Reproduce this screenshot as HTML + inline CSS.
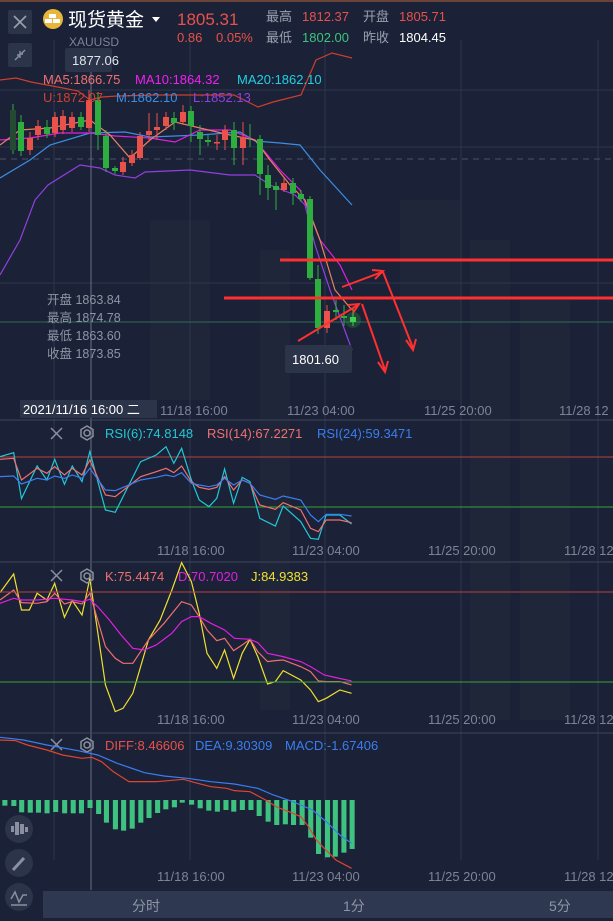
<!DOCTYPE html>
<html><head><meta charset="utf-8"><style>
html,body{margin:0;padding:0;background:#1b2136;}
body{width:613px;height:921px;overflow:hidden;position:relative;font-family:"Liberation Sans","Noto Sans CJK SC",sans-serif;}
svg{position:absolute;left:0;top:0}
text{font-family:"Liberation Sans","Noto Sans CJK SC",sans-serif}
</style></head><body>
<svg width="613" height="921" viewBox="0 0 613 921">
<rect width="613" height="921" fill="#1b2136"/>
<line x1="0" y1="1" x2="613" y2="1" stroke="#b8653a" stroke-width="1"/>
<!-- faint buildings -->
<g fill="#1f2639">
<rect x="400" y="200" width="60" height="200"/><rect x="470" y="240" width="40" height="480"/><rect x="520" y="300" width="50" height="420"/><rect x="150" y="220" width="60" height="180"/><rect x="260" y="250" width="30" height="460"/>
</g>
<!-- vertical grid -->
<g stroke="#2e364d" stroke-width="1">
<line x1="54" y1="40" x2="54" y2="860"/><line x1="190" y1="40" x2="190" y2="860"/><line x1="325" y1="40" x2="325" y2="860"/><line x1="461" y1="40" x2="461" y2="860"/><line x1="598" y1="40" x2="598" y2="860"/>
<line x1="0" y1="90" x2="613" y2="90"/><line x1="0" y1="147" x2="613" y2="147"/><line x1="0" y1="283" x2="613" y2="283"/>
</g>
<line x1="0" y1="159" x2="613" y2="159" stroke="#4a5268" stroke-dasharray="6,5"/>
<line x1="0" y1="322" x2="613" y2="322" stroke="#2d6b52"/>
<line x1="91" y1="60" x2="91" y2="890" stroke="#6a7084" stroke-width="1"/>
<g stroke="#3e465c"><line x1="0" y1="420" x2="613" y2="420"/><line x1="0" y1="562" x2="613" y2="562"/><line x1="0" y1="733" x2="613" y2="733"/></g>

<!-- BOLL & MA lines -->
<g fill="none" stroke-width="1.2">
<polyline stroke="#cc3f2e" points="0,80 16,78 31,82 47,85 63,88 78,91 90,100 102,97 117,96 156,95 234,95 258,107 273,102 301,95 316,60 332,53 352,58"/>
<polyline stroke="#3a8ee6" points="0,178 30,160 50,145 90,133 125,132 150,137 200,135 240,132 255,141 280,143 300,145 320,170 352,205"/>
<polyline stroke="#e020e0" points="0,140 30,138 60,133 90,133 115,136 150,138 175,142 200,130 230,130 255,140 280,170 300,190 320,240 340,265 352,290"/>
<polyline stroke="#e8805f" points="0,145 20,130 50,128 90,120 110,135 130,158 150,140 175,122 200,128 230,135 255,140 270,160 290,185 305,200 320,240 335,290 352,310"/>
<polyline stroke="#9040e0" points="0,275 20,240 35,200 48,185 80,165 100,168 115,175 135,178 145,172 190,170 230,175 255,175 270,185 295,195 305,205 315,245 330,290 352,350"/>
</g>
<!-- candles -->
<g>
<g fill="#2fae40" stroke="#2fae40"><line x1="13" y1="104" x2="13" y2="154"/><rect x="10" y="110" width="6" height="40" fill="#244a34" stroke="none"/></g>
<g fill="#2fae40" stroke="#2fae40"><line x1="21" y1="115" x2="21" y2="156"/><rect x="18" y="122" width="6" height="29" stroke="none"/></g>
<g fill="#e8524a" stroke="#e8524a"><line x1="30" y1="132" x2="30" y2="155"/><rect x="27" y="138" width="6" height="12" stroke="none"/></g>
<g fill="#e8524a" stroke="#e8524a"><line x1="38" y1="120" x2="38" y2="140"/><rect x="35" y="126" width="6" height="9" stroke="none"/></g>
<g fill="#2fae40" stroke="#2fae40"><line x1="47" y1="120" x2="47" y2="138"/><rect x="44" y="127" width="6" height="7" stroke="none"/></g>
<g fill="#e8524a" stroke="#e8524a"><line x1="55" y1="112" x2="55" y2="137"/><rect x="52" y="117" width="6" height="16" stroke="none"/></g>
<g fill="#e8524a" stroke="#e8524a"><line x1="63" y1="110" x2="63" y2="134"/><rect x="60" y="116" width="6" height="14" stroke="none"/></g>
<g fill="#e8524a" stroke="#e8524a"><line x1="72" y1="112" x2="72" y2="132"/><rect x="69" y="117" width="6" height="11" stroke="none"/></g>
<g fill="#2fae40" stroke="#2fae40"><line x1="81" y1="112" x2="81" y2="130"/><rect x="78" y="117" width="6" height="10" stroke="none"/></g>
<g fill="#e8524a" stroke="#e8524a"><line x1="89" y1="90" x2="89" y2="132"/><rect x="86" y="100" width="6" height="28" stroke="none"/></g>
<g fill="#2fae40" stroke="#2fae40"><line x1="98" y1="92" x2="98" y2="150"/><rect x="95" y="100" width="6" height="35" stroke="none"/></g>
<g fill="#2fae40" stroke="#2fae40"><line x1="106" y1="130" x2="106" y2="172"/><rect x="103" y="136" width="6" height="32" stroke="none"/></g>
<g fill="#2fae40" stroke="#2fae40"><line x1="115" y1="166" x2="115" y2="174"/><rect x="112" y="168" width="6" height="3" stroke="none"/></g>
<g fill="#e8524a" stroke="#e8524a"><line x1="123" y1="157" x2="123" y2="175"/><rect x="120" y="162" width="6" height="10" stroke="none"/></g>
<g fill="#e8524a" stroke="#e8524a"><line x1="132" y1="150" x2="132" y2="166"/><rect x="129" y="155" width="6" height="8" stroke="none"/></g>
<g fill="#e8524a" stroke="#e8524a"><line x1="140" y1="132" x2="140" y2="160"/><rect x="137" y="136" width="6" height="22" stroke="none"/></g>
<g fill="#e8524a" stroke="#e8524a"><line x1="149" y1="113" x2="149" y2="142"/><rect x="146" y="131" width="6" height="4" stroke="none"/></g>
<g fill="#e8524a" stroke="#e8524a"><line x1="157" y1="113" x2="157" y2="140"/><rect x="154" y="127" width="6" height="3" stroke="none"/></g>
<g fill="#e8524a" stroke="#e8524a"><line x1="166" y1="112" x2="166" y2="130"/><rect x="163" y="117" width="6" height="9" stroke="none"/></g>
<g fill="#2fae40" stroke="#2fae40"><line x1="174" y1="112" x2="174" y2="130"/><rect x="171" y="118" width="6" height="5" stroke="none"/></g>
<g fill="#e8524a" stroke="#e8524a"><line x1="183" y1="105" x2="183" y2="125"/><rect x="180" y="112" width="6" height="10" stroke="none"/></g>
<g fill="#2fae40" stroke="#2fae40"><line x1="191" y1="106" x2="191" y2="142"/><rect x="188" y="111" width="6" height="15" stroke="none"/></g>
<g fill="#2fae40" stroke="#2fae40"><line x1="200" y1="125" x2="200" y2="155"/><rect x="197" y="132" width="6" height="7" stroke="none"/></g>
<g fill="#2fae40" stroke="#2fae40"><line x1="208" y1="135" x2="208" y2="146"/><rect x="205" y="140" width="6" height="2" stroke="none"/></g>
<g fill="#e8524a" stroke="#e8524a"><line x1="217" y1="135" x2="217" y2="150"/><rect x="214" y="142" width="6" height="1.5" stroke="none"/></g>
<g fill="#e8524a" stroke="#e8524a"><line x1="225" y1="125" x2="225" y2="150"/><rect x="222" y="130" width="6" height="10" stroke="none"/></g>
<g fill="#2fae40" stroke="#2fae40"><line x1="234" y1="122" x2="234" y2="165"/><rect x="231" y="130" width="6" height="18" stroke="none"/></g>
<g fill="#e8524a" stroke="#e8524a"><line x1="243" y1="122" x2="243" y2="165"/><rect x="240" y="137" width="6" height="11" stroke="none"/></g>
<g fill="#2fae40" stroke="#2fae40"><line x1="250" y1="124" x2="250" y2="147"/></g>
<g fill="#2fae40" stroke="#2fae40"><line x1="260" y1="135" x2="260" y2="195"/><rect x="257" y="139" width="6" height="35" stroke="none"/></g>
<g fill="#2fae40" stroke="#2fae40"><line x1="268" y1="165" x2="268" y2="200"/><rect x="265" y="175" width="6" height="13" stroke="none"/></g>
<g fill="#2fae40" stroke="#2fae40"><line x1="276" y1="182" x2="276" y2="210"/><rect x="273" y="186" width="6" height="4" stroke="none"/></g>
<g fill="#e8524a" stroke="#e8524a"><line x1="284" y1="178" x2="284" y2="192"/><rect x="281" y="183" width="6" height="7" stroke="none"/></g>
<g fill="#2fae40" stroke="#2fae40"><line x1="293" y1="178" x2="293" y2="205"/><rect x="290" y="183" width="6" height="10" stroke="none"/></g>
<g fill="#2fae40" stroke="#2fae40"><line x1="301" y1="190" x2="301" y2="202"/><rect x="298" y="194" width="6" height="5" stroke="none"/></g>
<g fill="#2fae40" stroke="#2fae40"><line x1="310" y1="196" x2="310" y2="280"/><rect x="307" y="199" width="6" height="79" stroke="none"/></g>
<g fill="#2fae40" stroke="#2fae40"><line x1="318" y1="265" x2="318" y2="334"/><rect x="315" y="279" width="6" height="49" stroke="none"/></g>
<g fill="#e8524a" stroke="#e8524a"><line x1="327" y1="305" x2="327" y2="333"/><rect x="324" y="311" width="6" height="17" stroke="none"/></g>
<g fill="#2fae40" stroke="#2fae40"><line x1="336" y1="300" x2="336" y2="320"/><rect x="333" y="310" width="6" height="2" stroke="none"/></g>
<g fill="#2fae40" stroke="#2fae40"><line x1="344" y1="305" x2="344" y2="326"/><rect x="341" y="316" width="6" height="2" stroke="none"/></g>
<circle cx="353" cy="320" r="8" fill="#2fae40" opacity="0.25"/>
<g fill="#3fd050" stroke="#3fd050"><line x1="353" y1="308" x2="353" y2="326"/><rect x="350" y="317" width="6" height="5" stroke="none"/></g>
</g>
<!-- red drawing -->
<g stroke="#ff3030" fill="none">
<line x1="280" y1="260" x2="613" y2="260" stroke-width="3"/>
<line x1="224" y1="298" x2="613" y2="298" stroke-width="3"/>
<g stroke-width="2">
<line x1="298" y1="341" x2="358" y2="305"/><polyline points="348,305 359,304 353,313"/>
<line x1="342" y1="287" x2="382" y2="272"/><polyline points="372,270 383,271 375,279"/>
<line x1="383" y1="272" x2="413" y2="348"/><polyline points="406,340 413,350 416,339"/>
<line x1="362" y1="304" x2="385" y2="370"/><polyline points="378,362 385,372 388,361"/>
</g></g>

<!-- header -->
<rect x="8" y="10" width="24" height="24" rx="2" fill="#2c3449"/>
<path d="M14 16 L26 28 M26 16 L14 28" stroke="#9aa0ae" stroke-width="1.6"/>
<rect x="8" y="43" width="24" height="24" rx="2" fill="#2c3449"/>
<path d="M15 60 L19 56 M17 55 L20 55 L20 58 M25 50 L21 54 M20 51 L20 54 L23 54" stroke="#8a90a0" stroke-width="1.4" fill="none"/>
<circle cx="53" cy="19" r="10" fill="#e8b73a"/>
<rect x="49" y="14" width="7" height="4" fill="#fff"/><rect x="45" y="19" width="7" height="4" fill="#fff"/><rect x="53" y="19" width="7" height="4" fill="#fff"/>
<text x="68" y="26" font-size="19" fill="#fff">现货黄金</text>
<path d="M152 17 L160 17 L156 22Z" fill="#fff"/>
<text x="69" y="46" font-size="12" fill="#7d8496">XAUUSD</text>
<text x="177" y="25" font-size="17" fill="#e8524a">1805.31</text>
<text x="177" y="42" font-size="13" fill="#e8524a">0.86</text>
<text x="216" y="42" font-size="13" fill="#e8524a">0.05%</text>
<g font-size="13"><text x="266" y="21" fill="#9aa0ae">最高</text><text x="302" y="21" fill="#e8524a">1812.37</text>
<text x="363" y="21" fill="#9aa0ae">开盘</text><text x="399" y="21" fill="#e8524a">1805.71</text>
<text x="266" y="42" fill="#9aa0ae">最低</text><text x="302" y="42" fill="#3ec27f">1802.00</text>
<text x="363" y="42" fill="#9aa0ae">昨收</text><text x="399" y="42" fill="#fff">1804.45</text></g>
<rect x="65" y="48" width="47" height="24" rx="2" fill="#2c3449"/>
<text x="72" y="65" font-size="13" fill="#e0e4ec">1877.06</text>
<g font-size="13"><text x="43" y="84" fill="#f07070">MA5:1866.75</text><text x="135" y="84" fill="#f020f0">MA10:1864.32</text><text x="237" y="84" fill="#20d0e0">MA20:1862.10</text>
<text x="43" y="102" fill="#d04030">U:1872.07</text><text x="116" y="102" fill="#3a8ee6">M:1862.10</text><text x="193" y="102" fill="#9040e0">L:1852.13</text></g>
<g font-size="12.5" fill="#8f95a5"><text x="47" y="304">开盘 1863.84</text><text x="47" y="322">最高 1874.78</text><text x="47" y="340">最低 1863.60</text><text x="47" y="358">收盘 1873.85</text></g>
<rect x="285" y="345" width="67" height="28" rx="2" fill="#2c3449"/>
<text x="292" y="364" font-size="13" fill="#fff">1801.60</text>
<g font-size="13" fill="#7d8496"><text x="160" y="415">11/18 16:00</text><text x="287" y="415">11/23 04:00</text><text x="424" y="415">11/25 20:00</text><text x="559" y="415">11/28 12</text></g>
<rect x="20" y="400" width="137" height="18" fill="#2c3449"/>
<text x="23" y="414" font-size="13" fill="#fff">2021/11/16 16:00 二</text>

<!-- RSI -->
<line x1="0" y1="457" x2="613" y2="457" stroke="#b84040"/><line x1="0" y1="507" x2="613" y2="507" stroke="#3aa33a"/>
<g fill="none" stroke-width="1.2">
<g transform="translate(0,400) scale(0.3906,0.3333)">
<polyline vector-effect="non-scaling-stroke" stroke="#20c8d8" points="0,170 35,158 55,296 95,198 120,240 140,178 165,253 185,198 210,245 230,155 270,330 295,337 360,185 400,165 425,140 445,190 465,145 490,240 510,300 535,320 555,295 575,207 598,310 620,232 640,245 665,355 705,378 725,318 770,365 795,415 815,418 835,345 870,345 900,372"/>
<polyline vector-effect="non-scaling-stroke" stroke="#f07070" points="0,178 35,175 55,240 95,205 120,220 140,200 165,225 185,205 210,225 230,180 270,285 295,290 360,230 400,215 425,205 445,218 465,198 490,245 510,262 535,268 555,262 575,230 598,270 620,240 640,250 665,315 705,328 725,308 770,330 795,385 815,395 835,360 870,360 900,368"/>
<polyline vector-effect="non-scaling-stroke" stroke="#3a7ef0" points="0,230 35,228 55,252 95,235 120,240 140,228 165,235 185,225 210,235 230,205 270,270 295,272 360,240 400,232 425,225 445,230 465,218 490,250 510,255 535,260 555,255 575,235 598,255 620,240 640,250 665,285 705,298 725,288 770,300 795,345 815,365 835,343 870,343 900,348"/>
<polyline vector-effect="non-scaling-stroke" stroke="#f0e030" points="0,578 35,522 55,630 75,630 95,580 120,600 140,550 165,652 185,602 210,645 230,535 270,855 295,935 315,925 340,880 380,720 410,660 440,570 465,488 490,545 510,640 530,760 555,805 575,750 598,835 620,760 640,718 660,770 685,852 705,845 725,812 770,840 795,870 815,905 835,895 870,870 900,880"/>
<polyline vector-effect="non-scaling-stroke" stroke="#f07070" points="0,600 35,570 55,608 95,610 120,605 140,580 165,612 185,605 210,612 230,580 270,740 295,775 315,790 340,790 380,720 420,670 465,605 490,615 510,650 530,690 555,722 575,715 598,752 620,735 640,718 660,755 685,785 705,782 725,780 770,800 795,815 815,843 835,845 870,845 900,855"/>
<polyline vector-effect="non-scaling-stroke" stroke="#e020e0" points="0,610 35,595 55,600 95,600 140,595 185,600 210,605 230,598 250,620 280,660 310,705 340,745 370,750 400,735 440,700 465,665 490,650 510,650 540,670 575,690 600,715 640,718 660,728 685,760 725,770 770,785 795,800 830,825 860,833 900,843"/>
</g></g>
<g stroke="#8a90a0" stroke-width="1.5" fill="none">
<path d="M51 428 L62 439 M62 428 L51 439"/><circle cx="87" cy="433" r="3"/><path d="M87 426 L93 429.5 L93 436.5 L87 440 L81 436.5 L81 429.5Z"/>
<path d="M51 570 L62 581 M62 570 L51 581"/><circle cx="87" cy="576" r="3"/><path d="M87 569 L93 572.5 L93 579.5 L87 583 L81 579.5 L81 572.5Z"/>
<path d="M51 739 L62 750 M62 739 L51 750"/><circle cx="87" cy="745" r="3"/><path d="M87 738 L93 741.5 L93 748.5 L87 752 L81 748.5 L81 741.5Z"/>
</g>
<g font-size="13"><text x="105" y="438" fill="#20c8d8">RSI(6):74.8148</text><text x="207" y="438" fill="#f07070">RSI(14):67.2271</text><text x="317" y="438" fill="#3a7ef0">RSI(24):59.3471</text>
<text x="105" y="581" fill="#f07070">K:75.4474</text><text x="178" y="581" fill="#e020e0">D:70.7020</text><text x="251" y="581" fill="#f0e030">J:84.9383</text>
<text x="105" y="750" fill="#e8524a">DIFF:8.46606</text><text x="195" y="750" fill="#3a7ef0">DEA:9.30309</text><text x="285" y="750" fill="#3a7ef0">MACD:-1.67406</text></g>
<g font-size="13" fill="#7d8496"><text x="157" y="555">11/18 16:00</text><text x="292" y="555">11/23 04:00</text><text x="428" y="555">11/25 20:00</text><text x="564" y="555">11/28 12</text>
<text x="157" y="724">11/18 16:00</text><text x="292" y="724">11/23 04:00</text><text x="428" y="724">11/25 20:00</text><text x="564" y="724">11/28 12</text>
<text x="157" y="881">11/18 16:00</text><text x="292" y="881">11/23 04:00</text><text x="428" y="881">11/25 20:00</text><text x="564" y="881">11/28 12</text></g>
<line x1="0" y1="682" x2="613" y2="682" stroke="#3aa33a"/><line x1="0" y1="592" x2="613" y2="592" stroke="#b84040"/>

<!-- MACD -->
<g fill="#3ec27f" transform="translate(0,720) scale(0.3906,0.3333)">
<rect x="6" y="240" width="13" height="17"/><rect x="29" y="240" width="13" height="18"/><rect x="49" y="240" width="13" height="37"/><rect x="71" y="240" width="13" height="38"/><rect x="92" y="240" width="13" height="38"/><rect x="114" y="240" width="13" height="40"/><rect x="136" y="240" width="13" height="36"/><rect x="159" y="240" width="13" height="40"/><rect x="181" y="240" width="13" height="40"/><rect x="202" y="240" width="13" height="40"/><rect x="224" y="240" width="13" height="24"/><rect x="246" y="240" width="13" height="42"/><rect x="266" y="240" width="13" height="68"/><rect x="289" y="240" width="13" height="88"/><rect x="310" y="240" width="13" height="92"/><rect x="332" y="240" width="13" height="86"/><rect x="354" y="240" width="13" height="68"/><rect x="375" y="240" width="13" height="54"/><rect x="397" y="240" width="13" height="39"/><rect x="418" y="240" width="13" height="28"/><rect x="440" y="240" width="13" height="22"/><rect x="460" y="240" width="13" height="8"/><rect x="484" y="240" width="13" height="14"/><rect x="506" y="240" width="13" height="25"/><rect x="528" y="240" width="13" height="32"/><rect x="550" y="240" width="13" height="35"/><rect x="572" y="240" width="13" height="30"/><rect x="592" y="240" width="13" height="35"/><rect x="614" y="240" width="13" height="30"/><rect x="636" y="240" width="13" height="30"/><rect x="657" y="240" width="13" height="48"/><rect x="680" y="240" width="13" height="65"/><rect x="702" y="240" width="13" height="75"/><rect x="724" y="240" width="13" height="73"/><rect x="745" y="240" width="13" height="75"/><rect x="767" y="240" width="13" height="75"/><rect x="789" y="240" width="13" height="113"/><rect x="809" y="240" width="13" height="162"/><rect x="832" y="240" width="13" height="172"/><rect x="852" y="240" width="13" height="170"/><rect x="874" y="240" width="13" height="158"/><rect x="895" y="240" width="13" height="147"/>
</g>
<g fill="none" stroke-width="1.2" transform="translate(0,720) scale(0.3906,0.3333)">
<polyline vector-effect="non-scaling-stroke" stroke="#3a7ef0" points="0,52 60,60 120,75 200,92 250,105 300,130 370,158 420,168 480,175 540,185 600,192 660,205 700,225 750,245 800,270 840,310 870,345 900,370"/>
<polyline vector-effect="non-scaling-stroke" stroke="#e0452f" points="0,60 40,62 70,75 120,90 160,105 210,115 235,112 260,125 290,155 330,185 400,185 430,182 470,178 500,188 540,200 580,205 600,212 640,215 680,240 710,262 740,275 770,290 790,320 810,360 830,385 860,420 900,445"/>
</g>
<!-- side buttons -->
<circle cx="19" cy="829" r="14" fill="#2c3449"/>
<g fill="#8a90a0"><rect x="11" y="826" width="3" height="6"/><rect x="15" y="822" width="4" height="13"/><rect x="20" y="824" width="4" height="10"/><rect x="25" y="827" width="3" height="5"/></g>
<circle cx="19" cy="863" r="14" fill="#2c3449"/>
<path d="M13 870 L24 858" stroke="#8a90a0" stroke-width="3"/>
<circle cx="19" cy="897" r="14" fill="#2c3449"/>
<path d="M11 899 L15 892 L19 902 L23 895 L27 895 M11 905 L27 905" stroke="#8a90a0" stroke-width="1.5" fill="none"/>
<!-- bottom bar -->
<rect x="43" y="891" width="570" height="27" fill="#2e3850"/>
<g font-size="14" fill="#8f95a5"><text x="132" y="911">分时</text><text x="343" y="911">1分</text><text x="549" y="911">5分</text></g>
</svg>
</body></html>
